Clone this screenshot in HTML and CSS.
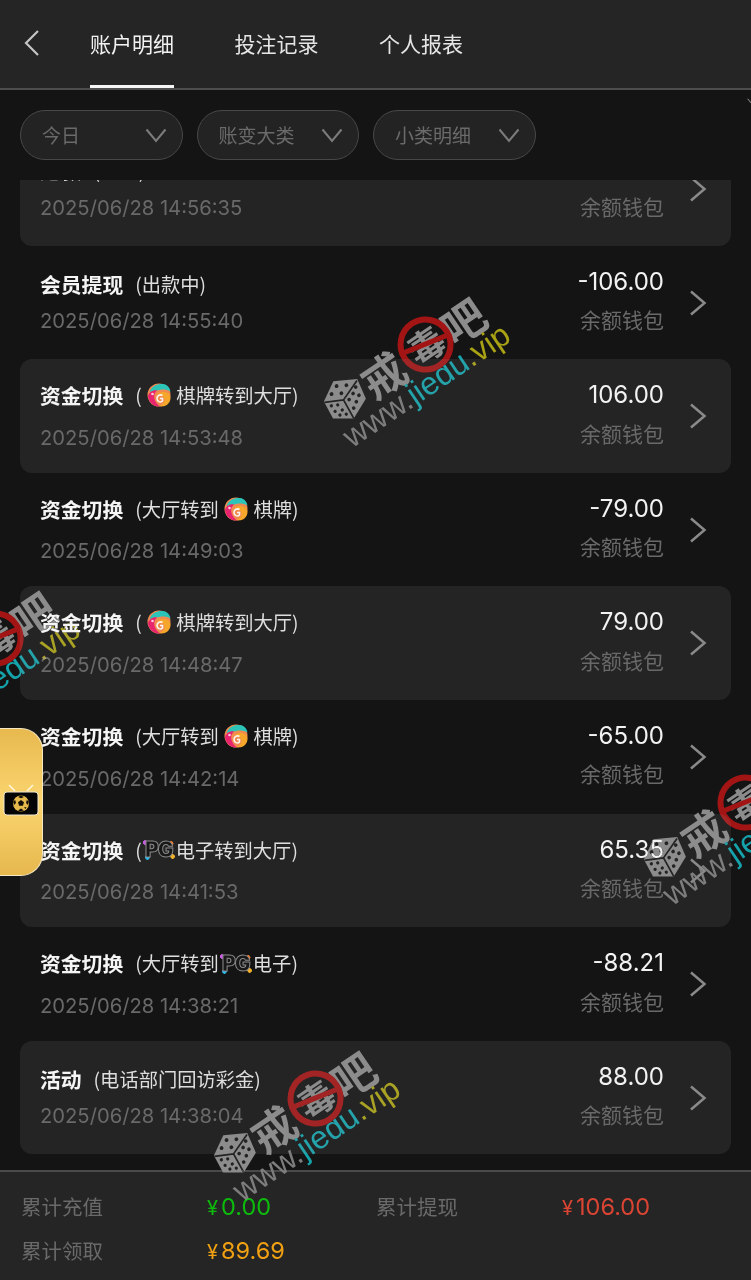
FILE: index.html
```html
<!DOCTYPE html>
<html lang="zh-CN">
<head>
    <meta charset="UTF-8">
    <meta name="viewport" content="width=device-width, initial-scale=1.0">
    <title>账户明细</title>
    <link rel="stylesheet" href="styles.css">
</head>
<body>
    <svg class="defs" width="0" height="0">
        <symbol id="chess" viewBox="0 0 24 24">
            <circle cx="12" cy="12" r="11.500" fill="#f08a50"/>
            <path d="M2.500 9C4.500 3 10.500 .500 16 1C20 1.500 23 4.500 23.500 8.500C20 6.500 15.500 6 12.500 7C8.500 8 5 8 2.500 9Z" fill="#2cc4b8"/>
            <path d="M1 13C2 9 6.500 6.500 10 7.500C7.500 9.500 6.500 13 7.500 16C8.500 19 10.500 21.500 13 23.500C7 24 1.500 19.500 1 13Z" fill="#e8246f"/>
            <path d="M10 11.500C12.500 8.500 18 8 21.500 10.500C24.500 13 24 18 21 21C18.500 23.500 14.500 24 12.500 22.500C15.500 22 18 19 17.500 16C17 13 13 11.500 10 11.500Z" fill="#f6a62a"/>
            <path d="M15.500 12.500C13.500 11 10 12.500 10 15.500C10 18.500 13.500 20 15.500 18V15.500H13" fill="none" stroke="#fdf5ee" stroke-width="1.600"/>
            <circle cx="5.500" cy="11" r="1.300" fill="#ffc9dc"/>
        </symbol>
        <symbol id="chevron" viewBox="0 0 18 26">
            <path d="M2 1.500L15.500 13L2 24.500" fill="none" stroke="currentColor" stroke-width="2.500"/>
        </symbol>
        <symbol id="caret" viewBox="0 0 22 15">
            <path d="M1.500 1.500L11 13L20.500 1.500" fill="none" stroke="currentColor" stroke-width="2"/>
        </symbol>
        <symbol id="dice" viewBox="0 0 48 48">
            <path d="M24 2L46 14L42 36L20 46L2 34L4 14Z" fill="#8c8c8c"/>
            <path d="M4 15L22 24L20 46M22 24L45 15" fill="none" stroke="#222" stroke-width="1.800"/>
            <g fill="#222">
                <circle cx="24" cy="8" r="2"/><circle cx="15" cy="12" r="2"/><circle cx="33" cy="13" r="2"/><circle cx="24" cy="17" r="2"/>
                <circle cx="8" cy="22" r="1.700"/><circle cx="14" cy="25" r="1.700"/><circle cx="8" cy="29" r="1.700"/><circle cx="15" cy="32" r="1.700"/><circle cx="10" cy="35" r="1.700"/><circle cx="16" cy="38" r="1.700"/>
                <circle cx="27" cy="27" r="1.900"/><circle cx="34" cy="24" r="1.900"/><circle cx="40" cy="20" r="1.900"/><circle cx="26" cy="37" r="1.900"/><circle cx="32" cy="33" r="1.900"/><circle cx="38" cy="29" r="1.900"/>
            </g>
        </symbol>
    </svg>

    <div class="page">
        <header class="topbar">
            <svg class="back" viewBox="0 0 18 28" width="18" height="28"><path d="M15 2L3 14L15 26" fill="none" stroke="#c4c4c4" stroke-width="2.200"/></svg>
            <nav class="tabs">
                <a class="tab active">账户明细</a>
                <a class="tab">投注记录</a>
                <a class="tab">个人报表</a>
            </nav>
        </header>

        <div class="filters">
            <div class="pill"><span>今日</span><svg class="caret"><use href="#caret"/></svg></div>
            <div class="pill"><span>账变大类</span><svg class="caret"><use href="#caret"/></svg></div>
            <div class="pill"><span>小类明细</span><svg class="caret"><use href="#caret"/></svg></div>
            <svg class="caret edge"><use href="#caret"/></svg>
        </div>

        <main class="list">
            <div class="rows">
                <div class="row card">
                    <div class="info"><div class="title"><b>退款</b><span>(成功)</span></div><div class="date">2025/06/28 14:56:35</div></div>
                    <div class="money"><div class="amount">106.00</div><div class="wallet">余额钱包</div></div>
                    <svg class="chevron"><use href="#chevron"/></svg>
                </div>
                <div class="row">
                    <div class="info"><div class="title"><b>会员提现</b><span>(出款中)</span></div><div class="date">2025/06/28 14:55:40</div></div>
                    <div class="money"><div class="amount">-106.00</div><div class="wallet">余额钱包</div></div>
                    <svg class="chevron"><use href="#chevron"/></svg>
                </div>
                <div class="row card">
                    <div class="info"><div class="title tall"><b>资金切换</b><span>( <svg class="logo"><use href="#chess"/></svg> 棋牌转到大厅)</span></div><div class="date">2025/06/28 14:53:48</div></div>
                    <div class="money"><div class="amount">106.00</div><div class="wallet">余额钱包</div></div>
                    <svg class="chevron"><use href="#chevron"/></svg>
                </div>
                <div class="row">
                    <div class="info"><div class="title tall"><b>资金切换</b><span>(大厅转到 <svg class="logo"><use href="#chess"/></svg> 棋牌)</span></div><div class="date">2025/06/28 14:49:03</div></div>
                    <div class="money"><div class="amount">-79.00</div><div class="wallet">余额钱包</div></div>
                    <svg class="chevron"><use href="#chevron"/></svg>
                </div>
                <div class="row card">
                    <div class="info"><div class="title tall"><b>资金切换</b><span>( <svg class="logo"><use href="#chess"/></svg> 棋牌转到大厅)</span></div><div class="date">2025/06/28 14:48:47</div></div>
                    <div class="money"><div class="amount">79.00</div><div class="wallet">余额钱包</div></div>
                    <svg class="chevron"><use href="#chevron"/></svg>
                </div>
                <div class="row">
                    <div class="info"><div class="title tall"><b>资金切换</b><span>(大厅转到 <svg class="logo"><use href="#chess"/></svg> 棋牌)</span></div><div class="date">2025/06/28 14:42:14</div></div>
                    <div class="money"><div class="amount">-65.00</div><div class="wallet">余额钱包</div></div>
                    <svg class="chevron"><use href="#chevron"/></svg>
                </div>
                <div class="row card">
                    <div class="info"><div class="title tall"><b>资金切换</b><span>(<i class="pg">PG</i>电子转到大厅)</span></div><div class="date">2025/06/28 14:41:53</div></div>
                    <div class="money"><div class="amount">65.35</div><div class="wallet">余额钱包</div></div>
                    <svg class="chevron"><use href="#chevron"/></svg>
                </div>
                <div class="row">
                    <div class="info"><div class="title tall"><b>资金切换</b><span>(大厅转到<i class="pg">PG</i>电子)</span></div><div class="date">2025/06/28 14:38:21</div></div>
                    <div class="money"><div class="amount">-88.21</div><div class="wallet">余额钱包</div></div>
                    <svg class="chevron"><use href="#chevron"/></svg>
                </div>
                <div class="row card">
                    <div class="info"><div class="title"><b>活动</b><span>(电话部门回访彩金)</span></div><div class="date">2025/06/28 14:38:04</div></div>
                    <div class="money"><div class="amount">88.00</div><div class="wallet">余额钱包</div></div>
                    <svg class="chevron"><use href="#chevron"/></svg>
                </div>
            </div>
        </main>

        <footer class="totals">
            <span class="label">累计充值</span><span class="sum green"><small>¥</small>0.00</span>
            <span class="label">累计提现</span><span class="sum red"><small>¥</small>106.00</span>
            <span class="label">累计领取</span><span class="sum orange"><small>¥</small>89.69</span>
        </footer>

        <div class="float-btn">
            <svg class="tv" viewBox="0 0 36 32" width="36" height="32">
                <path d="M6 1L12 7M30 1L24 7" fill="none" stroke="#fff6dc" stroke-width="1.500"/>
                <rect x="1" y="8" width="34" height="23" rx="3" fill="#050505" stroke="#efe8d2" stroke-width="1"/>
                <circle cx="18" cy="19.500" r="8" fill="#e6b94c"/>
                <path d="M18 16L21 18.200L19.900 21.700H16.100L15 18.200Z" fill="#141008"/>
                <path d="M18 11.500L21 13L18 14.200L15 13ZM25.800 17.500L25 21L23 19L23.800 16ZM10.200 17.500L11 21L13 19L12.200 16ZM21 26.500L17.500 27.300L15 26.500L18 24.500ZM22.500 25L23.500 23L21 23.500Z" fill="#141008"/>
            </svg>
        </div>

        <div class="mark mark-a">
            <div class="mark-top"><svg class="dice"><use href="#dice"/></svg><span>戒</span><span class="ban">毒</span><span>吧</span></div>
            <div class="mark-url">www.<em>jiedu</em><u>.vip</u></div>
        </div>
        <div class="mark mark-b">
            <div class="mark-top"><svg class="dice"><use href="#dice"/></svg><span>戒</span><span class="ban">毒</span><span>吧</span></div>
            <div class="mark-url">www.<em>jiedu</em><u>.vip</u></div>
        </div>
        <div class="mark mark-c">
            <div class="mark-top"><svg class="dice"><use href="#dice"/></svg><span>戒</span><span class="ban">毒</span><span>吧</span></div>
            <div class="mark-url">www.<em>jiedu</em><u>.vip</u></div>
        </div>
        <div class="mark mark-d">
            <div class="mark-top"><svg class="dice"><use href="#dice"/></svg><span>戒</span><span class="ban">毒</span><span>吧</span></div>
            <div class="mark-url">www.<em>jiedu</em><u>.vip</u></div>
        </div>
    </div>
</body>
</html>
```

FILE: styles.css
```css
* { box-sizing: border-box; }
html, body { margin: 0; padding: 0; background: #141414; }
body { font-family: "Inter", "Noto Sans CJK SC", sans-serif; overflow: hidden; }
.defs { position: absolute; }

.page { position: relative; width: 751px; height: 1280px; display: flex; flex-direction: column; overflow: hidden; }

/* top bar */
.topbar { height: 90px; flex: none; display: flex; background: #252525; border-bottom: 2px solid #4d4d4d; padding-left: 23px; }
.back { margin-top: 29px; }
.tabs { display: flex; gap: 60.500px; margin-left: 49px; }
.tab { font: 21px/86px "Noto Sans CJK SC", sans-serif; color: #e6e6e6; height: 88px; }
.tab.active { color: #f2f2f2; border-bottom: 3px solid #f5f5f5; }

/* filters */
.filters { position: relative; height: 90px; flex: none; display: flex; gap: 14px; padding: 20px 0 0 20px; background: #141414; }
.pill { width: 162.500px; height: 50px; border: 1px solid #484848; border-radius: 25px; background: #232323; display: flex; align-items: center; justify-content: space-between; padding: 0 15px 0 21px; color: #6a6a6a; font: 19px/26px "Noto Sans CJK SC", sans-serif; }
.caret { width: 22px; height: 15px; color: #7c7c7c; }
.caret.edge { position: absolute; left: 747px; top: 7px; width: 10px; height: 9px; color: #aaa; }

/* list */
.list { flex: 1; overflow: hidden; background: #141414; }
.rows { margin-top: -48px; }
.row { height: 113.600px; margin: 0 20px; padding: 0 24px 0 20px; display: flex; color: #fff; border-radius: 12px; }
.row.card { background: #242424; }
.info { flex: 1; display: flex; flex-direction: column; justify-content: center; }
.title { height: 28px; display: flex; align-items: center; gap: 12px; }
.title.tall { height: 38px; margin-top: -4px; }
.title b { font: 700 20.800px "Noto Sans CJK SC", sans-serif; color: #f5f5f5; }
.title span { font: 19.300px "Noto Sans CJK SC", sans-serif; color: #dedede; display: flex; align-items: center; white-space: pre; }
.logo { width: 24px; height: 24px; margin: 0 1px; }
.pg { font: 900 21px "Inter", sans-serif; width: 34px; text-align: center; letter-spacing: -1px; color: #181818; -webkit-text-stroke: 1px #8a8a8a; background: radial-gradient(circle at 9% 22%, #c65be0 2px, transparent 2.500px), radial-gradient(circle at 16% 82%, #2bb7e8 2px, transparent 2.500px), radial-gradient(circle at 86% 26%, #f07a2b 2px, transparent 2.500px), radial-gradient(circle at 90% 78%, #f0b02b 2px, transparent 2.500px); }
.date { margin-top: 9.500px; font-size: 20.200px; line-height: 28px; color: #696969; }
.money { text-align: right; padding-top: 21px; }
.amount { font-size: 24px; line-height: 30px; color: #f2f2f2; }
.wallet { margin-top: 7.500px; font: 21px/30px "Noto Sans CJK SC", sans-serif; color: #696969; }
.chevron { flex: none; width: 18px; height: 26px; margin: 44px 0 0 25px; color: #8a8a8a; }

/* totals */
.totals { height: 110px; flex: none; display: grid; grid-template-columns: 186px 169px 186px 1fr; grid-auto-rows: 44px; align-items: center; padding: 12px 0 0 21px; background: #252525; border-top: 2px solid #4a4a4a; }
.label { font: 20.500px "Noto Sans CJK SC", sans-serif; color: #6a6a6a; }
.sum { font-size: 23.500px; }
.sum small { font-size: 20px; margin-right: 3px; }
.green { color: #0dbb0d; }
.red { color: #da4433; }
.orange { color: #f0a012; }

/* floating button */
.float-btn { position: absolute; left: 0; top: 728px; width: 43px; height: 148px; display: flex; align-items: center; justify-content: center; padding-bottom: 4px; border: 1px solid #f4e7c2; border-left: 0; border-radius: 0 22px 22px 0; background: linear-gradient(#e7b94f, #fbd570 50%, #e6b84e); }

/* watermark */
.mark { position: absolute; width: 250px; height: 104px; transform: rotate(-34deg); pointer-events: none; mix-blend-mode: lighten; }
.mark-a { left: 317px; top: 308px; }
.mark-b { left: -113px; top: 602px; }
.mark-c { left: 637px; top: 766px; }
.mark-d { left: 207px; top: 1062px; }
.mark-top { display: flex; align-items: center; height: 60px; color: #8c8c8c; font: 700 44px/60px "Noto Sans CJK SC", sans-serif; }
.dice { width: 46px; height: 46px; flex: none; }
.ban { position: relative; flex: none; width: 56px; height: 56px; margin: 0 -6px 0 2px; border: 6px solid #a31212; border-radius: 50%; font-size: 36px; line-height: 42px; text-align: center; }
.ban::after { content: ""; position: absolute; left: -2px; right: -2px; top: 19px; height: 5px; background: #a31212; transform: rotate(12deg); }
.mark-url { margin: -16px 0 0 1px; font: 32px/40px "Liberation Sans", sans-serif; color: #7d7d7d; white-space: nowrap; }
.mark-url em { font-style: normal; color: #14a3ab; }
.mark-url u { text-decoration: none; color: #a9a20f; }
```
